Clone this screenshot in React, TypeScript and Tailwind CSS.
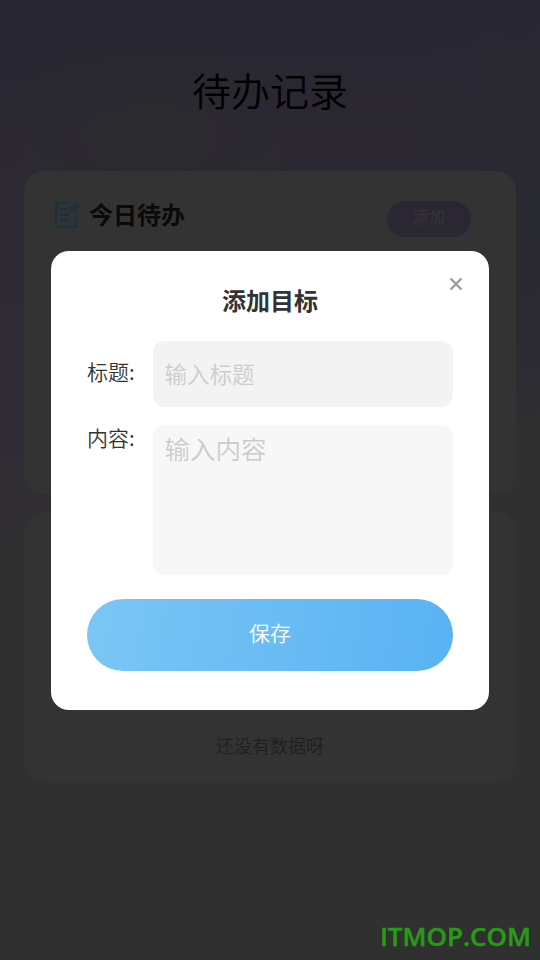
export default function App() {
  return (
    <main className="relative h-[960px] w-[540px] overflow-hidden bg-[#303030] bg-[radial-gradient(ellipse_150px_90px_at_150px_135px,#2c2b2e_0%,transparent_100%),radial-gradient(ellipse_200px_130px_at_60px_0px,#272732_0%,transparent_100%),radial-gradient(ellipse_120px_300px_at_540px_180px,#292931_0%,transparent_100%),radial-gradient(ellipse_160px_140px_at_540px_490px,#303030_0%,#303030_50%,transparent_100%),linear-gradient(180deg,#282631_0px,#2b2831_130px,#2d2a34_250px,#302c34_440px,#302e33_510px,#303030_570px)] font-['Noto_Sans_CJK_SC',sans-serif] font-[350]">
      <div className="flex h-full flex-col px-6">
        <h1 className="mt-[60px] h-[58px] text-center text-[39px] leading-[58px] font-[350] text-black">待办记录</h1>
        <section className="mt-[53px] h-[323px] rounded-[20px] bg-[#333333] pt-[30px] pr-[45px] pl-[30px]">
          <div className="flex">
            <svg className="h-7 w-7 shrink-0" viewBox="0 0 28 28" fill="none" stroke="#19323f" strokeWidth="2.4">
              <path d="M13.500 2H3.200a1 1 0 0 0-1 1v22a1 1 0 0 0 1 1h17.800a1 1 0 0 0 1-1V14" />
              <path d="M6.500 8.700H12.500M6.500 14h9M6.500 19h9" />
              <path d="M21.500 0.500l4.500 4.500-2 1.500-2.500 3-.7 2.500-2.700-2.400-4 3 3-4-2.300-2.600 3.200-.6 2.500-2.500z" fill="#19323f" stroke="none" />
            </svg>
            <h2 className="ml-[7px] -mt-px h-7 text-2xl leading-7 font-bold text-[#0a0a0a]">今日待办</h2>
            <button className="ml-auto h-9 w-[84px] rounded-full bg-[#2a2733] pb-1.5 text-[16.2px] leading-[30px] text-[#363539]">添加</button>
          </div>
        </section>
        <section className="mt-[18px] flex h-[270px] items-end justify-center rounded-[20px] bg-[#333333] pb-[23px]">
          <p className="text-lg leading-7 text-[#1f1f1f]">还没有数据呀</p>
        </section>
      </div>

      <div className="absolute inset-x-[51px] top-[251px] h-[459px] rounded-[18px] bg-white px-9 text-[#333333]">
        <button aria-label="关闭" className="absolute top-[26px] right-[26px] h-3.5 w-3.5">
          <svg viewBox="0 0 14 14" className="block h-3.5 w-3.5" stroke="#9b9b9b" strokeWidth="2.2">
            <path d="M1.500 1.500l11 11M12.500 1.500l-11 11" />
          </svg>
        </button>
        <h2 className="pt-[31px] text-center text-2xl leading-9 font-bold">添加目标</h2>
        <div className="mt-[23px] flex">
          <label className="w-[66px] pt-[15px] text-[21px] leading-[30px]">标题:</label>
          <input className="h-[66px] w-[300px] rounded-xl bg-[#f3f3f3] pr-3 pb-[3px] pl-[11.5px] text-[22.5px] placeholder:text-[#cccccc]" placeholder="输入标题" />
        </div>
        <div className="mt-[18px] flex">
          <label className="-mt-[3px] w-[66px] text-[21px] leading-[30px]">内容:</label>
          <textarea className="h-[150px] w-[300px] resize-none rounded-xl bg-[#f7f7f7] pt-[5px] pr-3 pl-[11.5px] text-[25.5px] leading-9 placeholder:text-[#cccccc]" placeholder="输入内容" />
        </div>
        <button className="mt-6 block h-[72px] w-full rounded-full bg-[linear-gradient(100deg,#7bc6f5,#59b2f3)] pb-1 text-[21px] text-white">保存</button>
      </div>

      <div className="absolute top-[918px] right-[9px] font-['Open_Sans',sans-serif] text-[26px] leading-9 font-semibold text-[#299a18] [-webkit-text-stroke:0.5px_#299a18]">ITMOP.COM</div>
    </main>
  );
}
